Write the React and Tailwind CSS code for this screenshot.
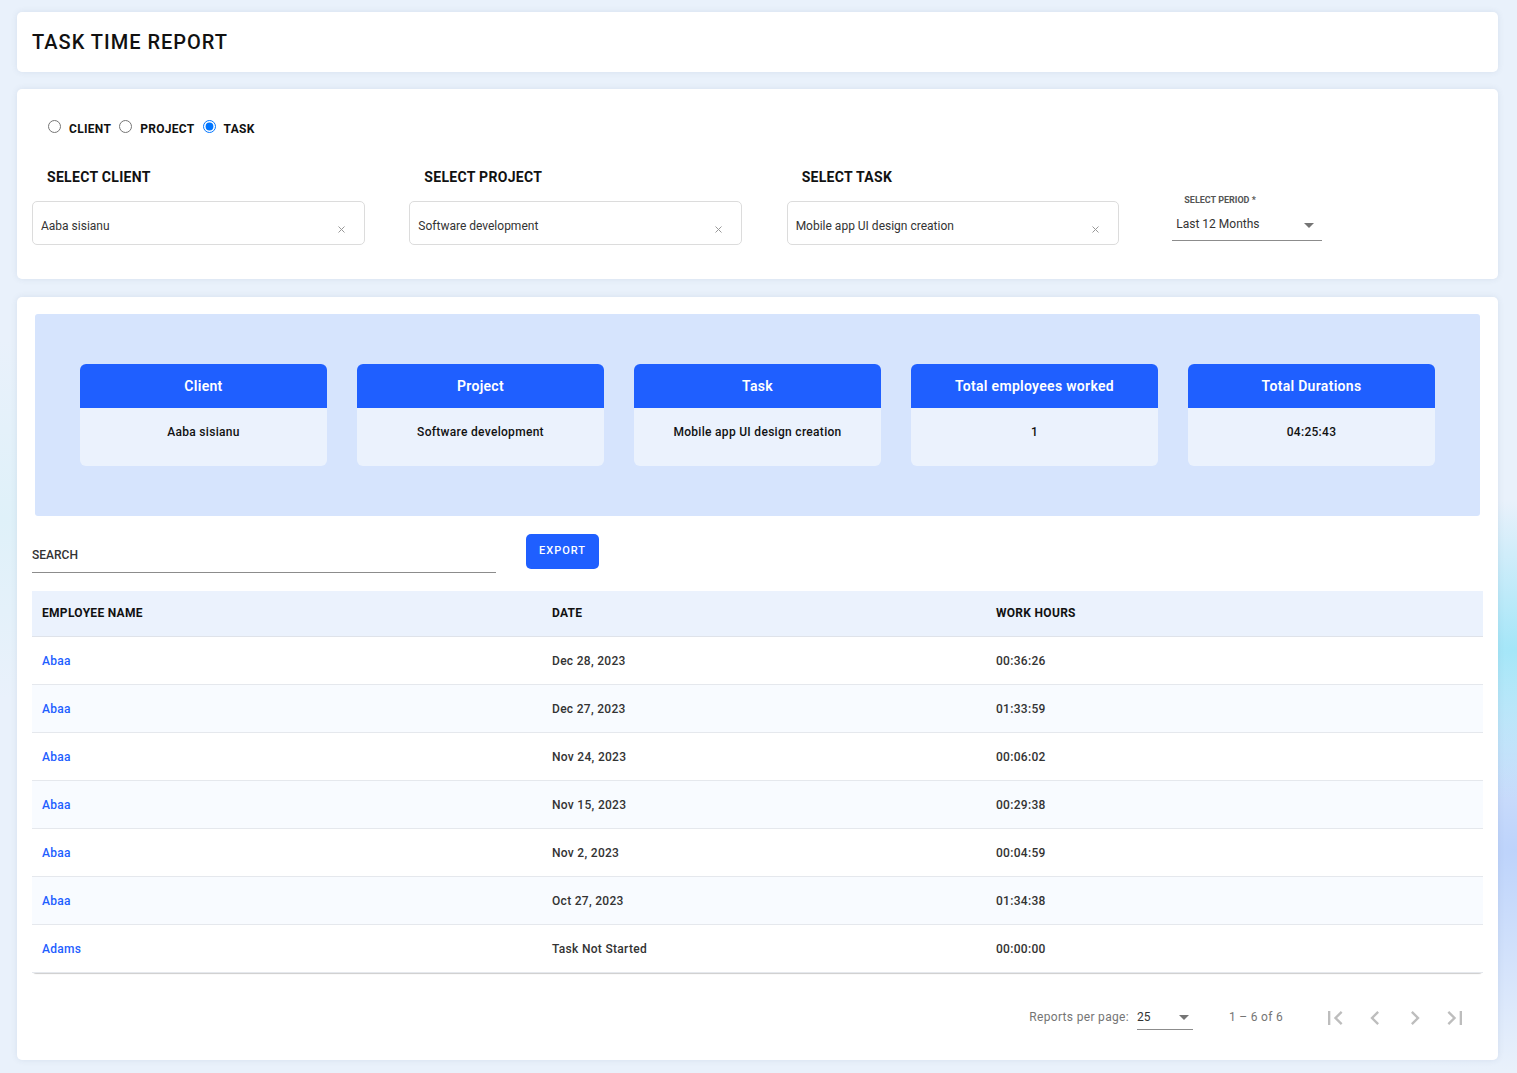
import React from 'react';

const summary = [
  { title: 'Client', value: 'Aaba sisianu' },
  { title: 'Project', value: 'Software development' },
  { title: 'Task', value: 'Mobile app UI design creation' },
  { title: 'Total employees worked', value: '1' },
  { title: 'Total Durations', value: '04:25:43' },
];

const rows = [
  { name: 'Abaa', date: 'Dec 28, 2023', hours: '00:36:26' },
  { name: 'Abaa', date: 'Dec 27, 2023', hours: '01:33:59' },
  { name: 'Abaa', date: 'Nov 24, 2023', hours: '00:06:02' },
  { name: 'Abaa', date: 'Nov 15, 2023', hours: '00:29:38' },
  { name: 'Abaa', date: 'Nov 2, 2023', hours: '00:04:59' },
  { name: 'Abaa', date: 'Oct 27, 2023', hours: '01:34:38' },
  { name: 'Adams', date: 'Task Not Started', hours: '00:00:00' },
];

function Radio({ label, checked }) {
  return (
    <label className="flex items-center">
      <input type="radio" name="reportType" defaultChecked={checked} className="mb-[4px] mr-[8px] h-[13px] w-[13px]" />
      <span className="text-[12px] font-bold leading-[14px] tracking-[0.3px] text-[#111]">{label}</span>
    </label>
  );
}

function SelectBox({ label, value, className }) {
  return (
    <div className={`w-[332.67px] ${className}`}>
      <div className="pl-[15px] text-[14px] font-bold leading-[16px] tracking-[0.3px] text-[#111]">{label}</div>
      <div className="mt-[16px] flex h-[44px] items-center justify-between rounded-[5px] border border-[#dcdcdc] pl-[8px] pr-[19px] pt-[6px]">
        <span className="text-[12px] leading-[14px] text-[#333]">{value}</span>
        <svg width="7" height="7" viewBox="0 0 7 7" className="mt-[6px]" stroke="#999" strokeWidth="1" fill="none">
          <path d="M0.5 0.5L6.5 6.5M6.5 0.5L0.5 6.5" />
        </svg>
      </div>
    </div>
  );
}

function PagerIcon({ d }) {
  return (
    <svg width="28" height="28" viewBox="0 0 24 24" fill="#bdbdbd">
      <path d={d} />
    </svg>
  );
}

export default function App() {
  return (
    <div className="flex h-[1073px] flex-col gap-[17px] overflow-hidden bg-[#e9f1fb] bg-[radial-gradient(420px_150px_at_100%_650px,#a4e6f8,transparent),radial-gradient(420px_220px_at_100%_850px,#bdd3fb,transparent),radial-gradient(300px_180px_at_0_520px,#dff1f9,transparent)] pl-[17px] pr-[19px] pt-[12px] font-['Roboto',sans-serif]">
      {/* Title */}
      <div className="flex h-[60px] items-center rounded-[5px] bg-white pl-[15px] shadow-[0_0_6px_rgba(60,80,120,0.1)]">
        <h1 className="text-[20px] font-medium leading-[28px] tracking-[1px] text-[#111]">TASK TIME REPORT</h1>
      </div>

      {/* Filters */}
      <div className="h-[190px] rounded-[5px] bg-white pl-[15px] pt-[31px] shadow-[0_0_6px_rgba(60,80,120,0.1)]">
        <div className="flex items-center gap-[8px] pl-[16px]">
          <Radio label="CLIENT" />
          <Radio label="PROJECT" />
          <Radio label="TASK" checked />
        </div>
        <div className="mt-[32px] flex items-start">
          <SelectBox label="SELECT CLIENT" value="Aaba sisianu" />
          <SelectBox label="SELECT PROJECT" value="Software development" className="ml-[44.67px]" />
          <SelectBox label="SELECT TASK" value="Mobile app UI design creation" className="ml-[44.67px]" />
          <div className="ml-[53px] mt-[25px] w-[150px]">
            <div className="pl-[12px] text-[9px] font-bold leading-[12px] text-[#555]">SELECT PERIOD *</div>
            <div className="mt-[5px] flex h-[30px] items-start justify-between border-b border-[#8c8c8c] pl-[4px] pr-[8px] pt-[4px]">
              <span className="text-[12px] leading-[18px] text-[#333]">Last 12 Months</span>
              <span className="mt-[8px] h-0 w-0 border-x-[5px] border-t-[5px] border-x-transparent border-t-[#757575]" />
            </div>
          </div>
        </div>
      </div>

      {/* Report */}
      <div className="mt-px h-[763px] rounded-[5px] bg-white px-[15px] pt-[17px] shadow-[0_0_6px_rgba(60,80,120,0.1)]">
        <div className="mx-[3px] flex h-[202px] gap-[30px] rounded-[3px] bg-[#d6e4fd] px-[45px] pt-[50px]">
          {summary.map(item => (
            <div key={item.title} className="h-[102px] w-[247px] overflow-hidden rounded-[6px] bg-[#ebf2fd]">
              <div className="flex h-[44px] items-center justify-center bg-[#1f5fff] text-[14px] font-semibold tracking-[0.3px] text-white">
                {item.title}
              </div>
              <div className="pt-[17px] text-center text-[12px] font-medium leading-[14px] tracking-[0.3px] text-[#111]">{item.value}</div>
            </div>
          ))}
        </div>

        <div className="mt-[18px] flex items-start">
          <div className="flex h-[39px] w-[464px] items-center border-b border-[#8c8c8c] pt-[4px]">
            <span className="text-[12px] font-medium text-[#333]">SEARCH</span>
          </div>
          <button className="ml-[30px] h-[35px] w-[73px] rounded-[5px] bg-[#1f5fff] text-[11px] font-medium tracking-[1px] text-white">
            EXPORT
          </button>
        </div>

        <div className="mt-[18px] rounded-b-[4px] shadow-[0_2px_1px_-1px_rgba(0,0,0,0.2)]">
          <table className="w-full table-fixed text-[12px] leading-[14px] tracking-[0.3px]">
            <thead>
              <tr className="h-[45px] border-b border-[#dfe3ea] bg-[#ebf2fd] text-left text-[#111]">
                <th className="w-[520px] pl-[10px] font-bold">EMPLOYEE NAME</th>
                <th className="w-[444px] font-bold">DATE</th>
                <th className="font-bold">WORK HOURS</th>
              </tr>
            </thead>
            <tbody>
              {rows.map((row, i) => (
                <tr key={i} className={`h-[48px] border-b border-[#e5e8ed] font-medium text-[#333] ${i % 2 === 1 ? 'bg-[#f8fbff]' : 'bg-white'}`}>
                  <td className="pl-[10px] pt-[2px] text-[#1f5fff]">{row.name}</td>
                  <td className="pt-[2px]">{row.date}</td>
                  <td className="pt-[2px]">{row.hours}</td>
                </tr>
              ))}
            </tbody>
          </table>
        </div>

        <div className="mt-[31px] flex items-center justify-end pr-[14px] text-[12px] text-[#757575]">
          <span className="mb-[2px] tracking-[0.32px]">Reports per page:</span>
          <div className="mb-[2px] ml-[8px] flex h-[26px] w-[56px] items-start justify-between border-b border-[#8c8c8c] pr-[4px] pt-[6px]">
            <span className="leading-[14px] text-[#333]">25</span>
            <span className="mt-[5px] h-0 w-0 border-x-[5px] border-t-[5px] border-x-transparent border-t-[#757575]" />
          </div>
          <span className="mb-[2px] ml-[36px] tracking-[0.3px]">1 – 6 of 6</span>
          <div className="ml-[38px] flex gap-[12px]">
            <PagerIcon d="M18.41 16.59 13.82 12l4.59-4.59L17 6l-6 6 6 6zM6 6h2v12H6z" />
            <PagerIcon d="M15.41 7.41 14 6l-6 6 6 6 1.41-1.41L10.83 12z" />
            <PagerIcon d="M10 6 8.59 7.41 13.17 12l-4.58 4.59L10 18l6-6z" />
            <PagerIcon d="M5.59 7.41 10.18 12l-4.59 4.59L7 18l6-6-6-6zM16 6h2v12h-2z" />
          </div>
        </div>
      </div>
    </div>
  );
}
